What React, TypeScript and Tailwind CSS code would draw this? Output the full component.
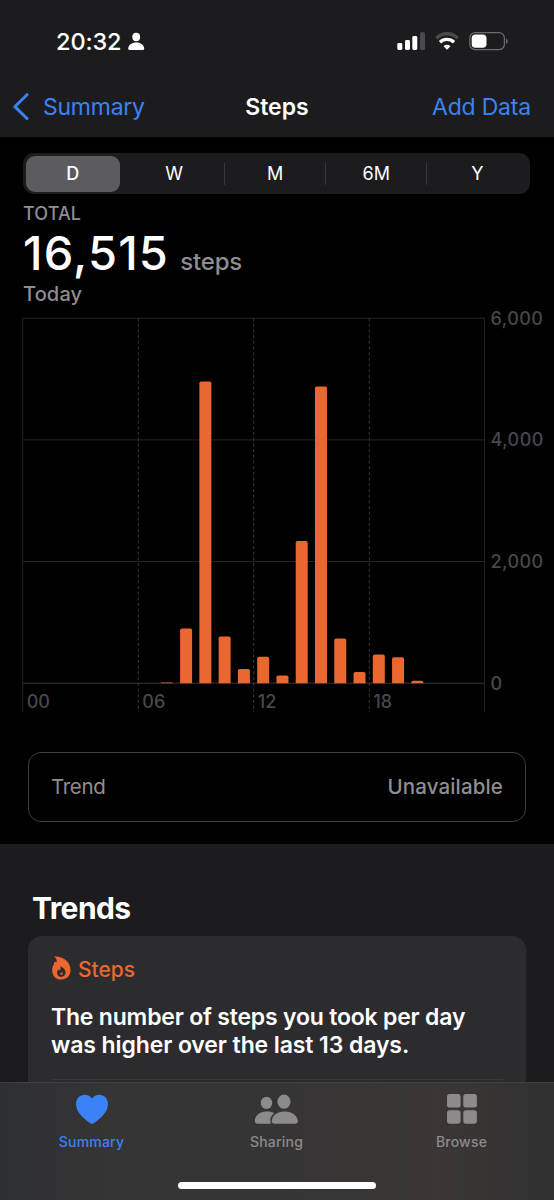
import { ReactNode } from "react";

const ranges = ["D", "W", "M", "6M", "Y"];

const bars = [
  { hour: 7, top: 682.6 },
  { hour: 8, top: 628.5 },
  { hour: 9, top: 381.5 },
  { hour: 10, top: 636.5 },
  { hour: 11, top: 669 },
  { hour: 12, top: 656.8 },
  { hour: 13, top: 675.5 },
  { hour: 14, top: 541 },
  { hour: 15, top: 386.5 },
  { hour: 16, top: 638.5 },
  { hour: 17, top: 672 },
  { hour: 18, top: 654.5 },
  { hour: 19, top: 657.3 },
  { hour: 20, top: 680.8 },
];

const yTicks = [
  { label: "6,000", y: 318.2 },
  { label: "4,000", y: 439.9 },
  { label: "2,000", y: 561.5 },
  { label: "0", y: 683.2 },
];

const xTicks = [
  { label: "00", x: 22.7 },
  { label: "06", x: 138.3 },
  { label: "12", x: 253.7 },
  { label: "18", x: 369.3 },
];

function StatusBar() {
  return (
    <div className="flex h-[76px] items-start pl-[56px] pr-[46px] pt-[28px]">
      <span className="text-[23.5px] font-medium leading-[28px] tracking-[-0.1px] text-white">
        20:32
      </span>
      <svg className="ml-[6px] mt-[4px]" width="17" height="19" viewBox="0 0 17 19" fill="#fff">
        <ellipse cx="8.2" cy="5" rx="3.9" ry="4.2" />
        <path d="M.2 16.4C.4 13 3.6 10.4 8.2 10.4S16 13 16.2 16.4Q16.2 18 14.7 18H1.7Q.2 18 .2 16.4Z" />
      </svg>

      <div className="ml-auto flex gap-[10px] pt-[4px]">
        <svg width="28" height="19" viewBox="0 0 28 19">
          <rect x="0.3" y="11" width="5" height="7" rx="1.4" fill="#fff" />
          <rect x="8" y="8" width="5" height="10" rx="1.4" fill="#fff" />
          <rect x="15.3" y="4" width="5" height="14" rx="1.4" fill="#fff" />
          <rect x="23" y="0.3" width="5" height="17.7" rx="1.4" fill="#4a4a4c" />
        </svg>
        <svg width="24" height="19" viewBox="0 0 24 19" fill="none">
          <path d="M1.4 6.2A15 15 0 0 1 22.6 6.2" stroke="#4a4a4c" strokeWidth="3.4" />
          <path d="M5 10.3A10 10 0 0 1 19 10.3" stroke="#fff" strokeWidth="3.3" />
          <path d="M12 17.7L8.5 14.2A5 5 0 0 1 15.5 14.2Z" fill="#fff" />
        </svg>
        <svg width="39" height="19" viewBox="0 0 39 19">
          <rect x="0.8" y="0.7" width="34.6" height="16.9" rx="5.3" fill="none" stroke="#6c6c6e" strokeWidth="1.2" />
          <rect x="2.7" y="2.6" width="14.8" height="13.2" rx="3.8" fill="#fff" />
          <path d="M37 6.3Q38.7 7.2 38.7 9.2T37 12Z" fill="#6c6c6e" />
        </svg>
      </div>
    </div>
  );
}

function NavBar() {
  return (
    <div className="grid h-[61px] grid-cols-3 items-start pl-[13px] pr-[23px] pt-[17px] text-[23px] leading-[28px] text-[#3c82f7]">
      <div className="flex">
        <svg className="-mt-[1px]" width="17" height="28" viewBox="0 0 17 28" fill="none">
          <path d="M14 2.7L1.8 14.7L14 26.5" stroke="#3c82f7" strokeWidth="3" strokeLinecap="round" strokeLinejoin="round" />
        </svg>
        <span className="ml-[13px] tracking-[-0.25px]">Summary</span>
      </div>
      <h1 className="pl-[10px] text-center font-semibold text-white">Steps</h1>
      <span className="whitespace-nowrap text-right tracking-[-0.2px]">Add Data</span>
    </div>
  );
}

function RangePicker() {
  return (
    <div className="ml-[23px] flex h-[41px] w-[507px] items-center rounded-[11px] bg-[#1c1c1f] p-[2.5px] text-[18px] text-white">
      {ranges.map((range, i) => (
        <div
          key={range}
          className={
            i === 0
              ? "mr-[4px] flex h-[36px] w-[94.5px] items-center justify-center rounded-[9px] bg-[#5b5b60] font-medium"
              : i === 1
                ? "flex h-[22px] flex-1 items-center justify-center"
                : "flex h-[22px] flex-1 items-center justify-center border-l border-[#38383b]"
          }
        >
          {range}
        </div>
      ))}
    </div>
  );
}

function StepsChart() {
  return (
    <svg
      className="block"
      width="554"
      height="410"
      viewBox="0 310 554 410"
      overflow="visible"
      fontFamily="Inter, sans-serif"
      fontSize="18"
      fontWeight="500"
    >
      {yTicks.map((tick) => (
        <g key={tick.label}>
          <path d={`M22.7 ${tick.y}H484.5`} stroke={tick.label === "0" ? "#38383a" : "#242426"} />
          <text x="490.5" y={tick.y + 6.5} fill="#48484a" letterSpacing="0.45">
            {tick.label}
          </text>
        </g>
      ))}
      {xTicks.map((tick, i) => (
        <g key={tick.label}>
          <path
            d={`M${tick.x} 318V712`}
            stroke={i === 0 ? "#242426" : "#3a3a3c"}
            strokeDasharray={i === 0 ? undefined : "3 2.7"}
          />
          <text x={tick.x + 4} y="708" fill="#48484a">
            {tick.label}
          </text>
        </g>
      ))}
      <path d="M484.5 318V712" stroke="#242426" />
      {bars.map((bar) => {
        const x = 180.1 + (bar.hour - 8) * 19.27;
        const h = 683.2 - bar.top;
        const r = Math.min(1.8, h);
        return (
          <path
            key={bar.hour}
            d={`M${x} 683.2V${bar.top + r}q0 ${-r} ${r} ${-r}h${12 - 2 * r}q${r} 0 ${r} ${r}V683.2Z`}
            fill="#eb6730"
          />
        );
      })}
    </svg>
  );
}

function Tab({ label, active, children }: { label: string; active?: boolean; children: ReactNode }) {
  return (
    <div className={active ? "flex flex-1 flex-col items-center text-[#3c82f7]" : "flex flex-1 flex-col items-center text-[#8c8a8b]"}>
      {children}
      <span className="mt-[7px] text-[14px] font-medium leading-[18px] tracking-[0.2px]">{label}</span>
    </div>
  );
}

function TabBar() {
  return (
    <div className="absolute inset-x-0 bottom-0 h-[118px] border-t border-[#404042] bg-[linear-gradient(90deg,#2e2f31_0%,#353536_20%,#363535_50%,#3b3635_80%,#303031_100%)] pt-[10px]">
      <div className="-ml-[1px] flex">
        <Tab label="Summary" active>
          <svg width="34" height="33" viewBox="0 0 34 33" fill="currentColor">
            <path d="M17 5.8C18.7 2.9 21.1 1.7 24.3 1.7C29.2 1.7 33 5.6 33 11C33 18.7 26.4 25 18.2 30.6Q17 31.5 15.8 30.6C7.6 25 1 18.7 1 11C1 5.6 4.8 1.7 9.7 1.7C12.9 1.7 15.3 2.9 17 5.8Z" />
          </svg>
        </Tab>
        <Tab label="Sharing">
          <svg width="45" height="33" viewBox="0 0 45 33" fill="currentColor">
            <ellipse cx="12.5" cy="9.9" rx="5.7" ry="6.2" />
            <path d="M20.1 20.1C18.1 18.9 15.4 18.5 12.5 18.5C6 18.5 .9 22.5 .9 28Q.9 30.7 3.5 30.7H17C15.3 27 16.7 23.1 20.1 20.1Z" />
            <ellipse cx="30" cy="8.7" rx="6.6" ry="7.1" />
            <path d="M30.5 18.5C22.5 18.5 17.7 23.3 17.7 28.3Q17.7 30.7 20.2 30.7H41.5Q43.9 30.7 43.9 28.3C43.6 23.2 38.5 18.5 30.5 18.5Z" />
          </svg>
        </Tab>
        <Tab label="Browse">
          <svg width="32" height="33" viewBox="0 0 32 33" fill="currentColor">
            <rect x="1" y="1" width="13.6" height="13.6" rx="2.7" />
            <rect x="17.3" y="1" width="13.6" height="13.6" rx="2.7" />
            <rect x="1" y="17.2" width="13.6" height="13.6" rx="2.7" />
            <rect x="17.3" y="17.2" width="13.6" height="13.6" rx="2.7" />
          </svg>
        </Tab>
      </div>
      <div className="mx-auto mt-[31px] h-[7px] w-[198px] rounded-full bg-white" />
    </div>
  );
}

export default function App() {
  return (
    <div className="relative h-[1200px] w-[554px] overflow-hidden bg-black font-['Inter',sans-serif]">
      <header className="bg-[#1c1c1e]">
        <StatusBar />
        <NavBar />
      </header>

      <main>
        <div className="h-[173px] pt-[16px]">
          <RangePicker />
          <div className="pl-[23px] font-medium text-[#8e8e93]">
            <p className="mt-[9px] text-[18px] leading-[22px] tracking-[0.1px]">TOTAL</p>
            <div className="flex h-[57px] items-baseline leading-[56px]">
              <span className="text-[47px] tracking-[1.2px] text-white">16,515</span>
              <span className="ml-[11px] text-[24px] tracking-[-0.15px]">steps</span>
            </div>
            <p className="text-[20px] leading-[24px] tracking-[0.15px]">Today</p>
          </div>
        </div>

        <StepsChart />

        <div className="mx-[28px] mt-[32px] flex h-[70px] items-center justify-between rounded-[13px] border border-[#3d3d3f] px-[22px] pt-[1px] text-[20.5px] text-[#8e8e93]">
          <span className="tracking-[-0.3px]">Trend</span>
          <span className="font-medium tracking-[0.15px]">Unavailable</span>
        </div>

        <section className="mt-[22px] h-[360px] bg-[#1c1c1e] px-[28px] pt-[46px]">
          <h2 className="pl-[4px] text-[30px] font-bold leading-[36px] tracking-[-0.6px] text-white">Trends</h2>
          <div className="mt-[10px] h-[200px] rounded-[14px] bg-[#2c2c2e] px-[23px] pt-[20px]">
            <div className="flex text-[#eb6730]">
              <svg width="20" height="24" viewBox="0 0 20 24" fill="currentColor">
                <path d="M3 .6C11.500 -.2 19.500 5.500 19.500 14C19.500 19.800 15.600 23.500 10.300 23.500C5 23.500 1.200 20 1.200 14.400C1.200 11.600 1.900 9.600 3.100 8.100C2.900 7.200 3 6.500 3.400 5.700L5.700 6.300C6.100 4 5.100 2 3 .6Z" />
                <path d="M9.400 10.300C12.700 11.800 14.600 13.900 14.600 16.600C14.600 19.200 12.800 20.800 10.400 20.800C7.900 20.800 6.100 19.300 6.100 16.900C6.100 15.500 6.600 14.400 7.500 13.600L8.900 14.400C9.600 13.200 9.700 11.600 9.400 10.300Z" fill="#2c2c2e" />
                <path d="M10.900 15.600C12.100 17.300 12 18.600 10.500 18.800C9.100 18.700 8.900 17.800 9.500 16.900L10.300 17.200Q10.800 16.500 10.900 15.600Z" />
              </svg>
              <span className="ml-[7px] pt-[1px] text-[21px] font-medium leading-[26px]">Steps</span>
            </div>
            <p className="mt-[20px] whitespace-nowrap border-b border-[#39393b] pb-[20px] text-[23px] font-semibold leading-[28px] tracking-[-0.2px] text-white">
              The number of steps you took per day
              <br />
              <span className="tracking-[-0.1px]">was higher over the last 13 days.</span>
            </p>
          </div>
        </section>
      </main>

      <TabBar />
    </div>
  );
}
